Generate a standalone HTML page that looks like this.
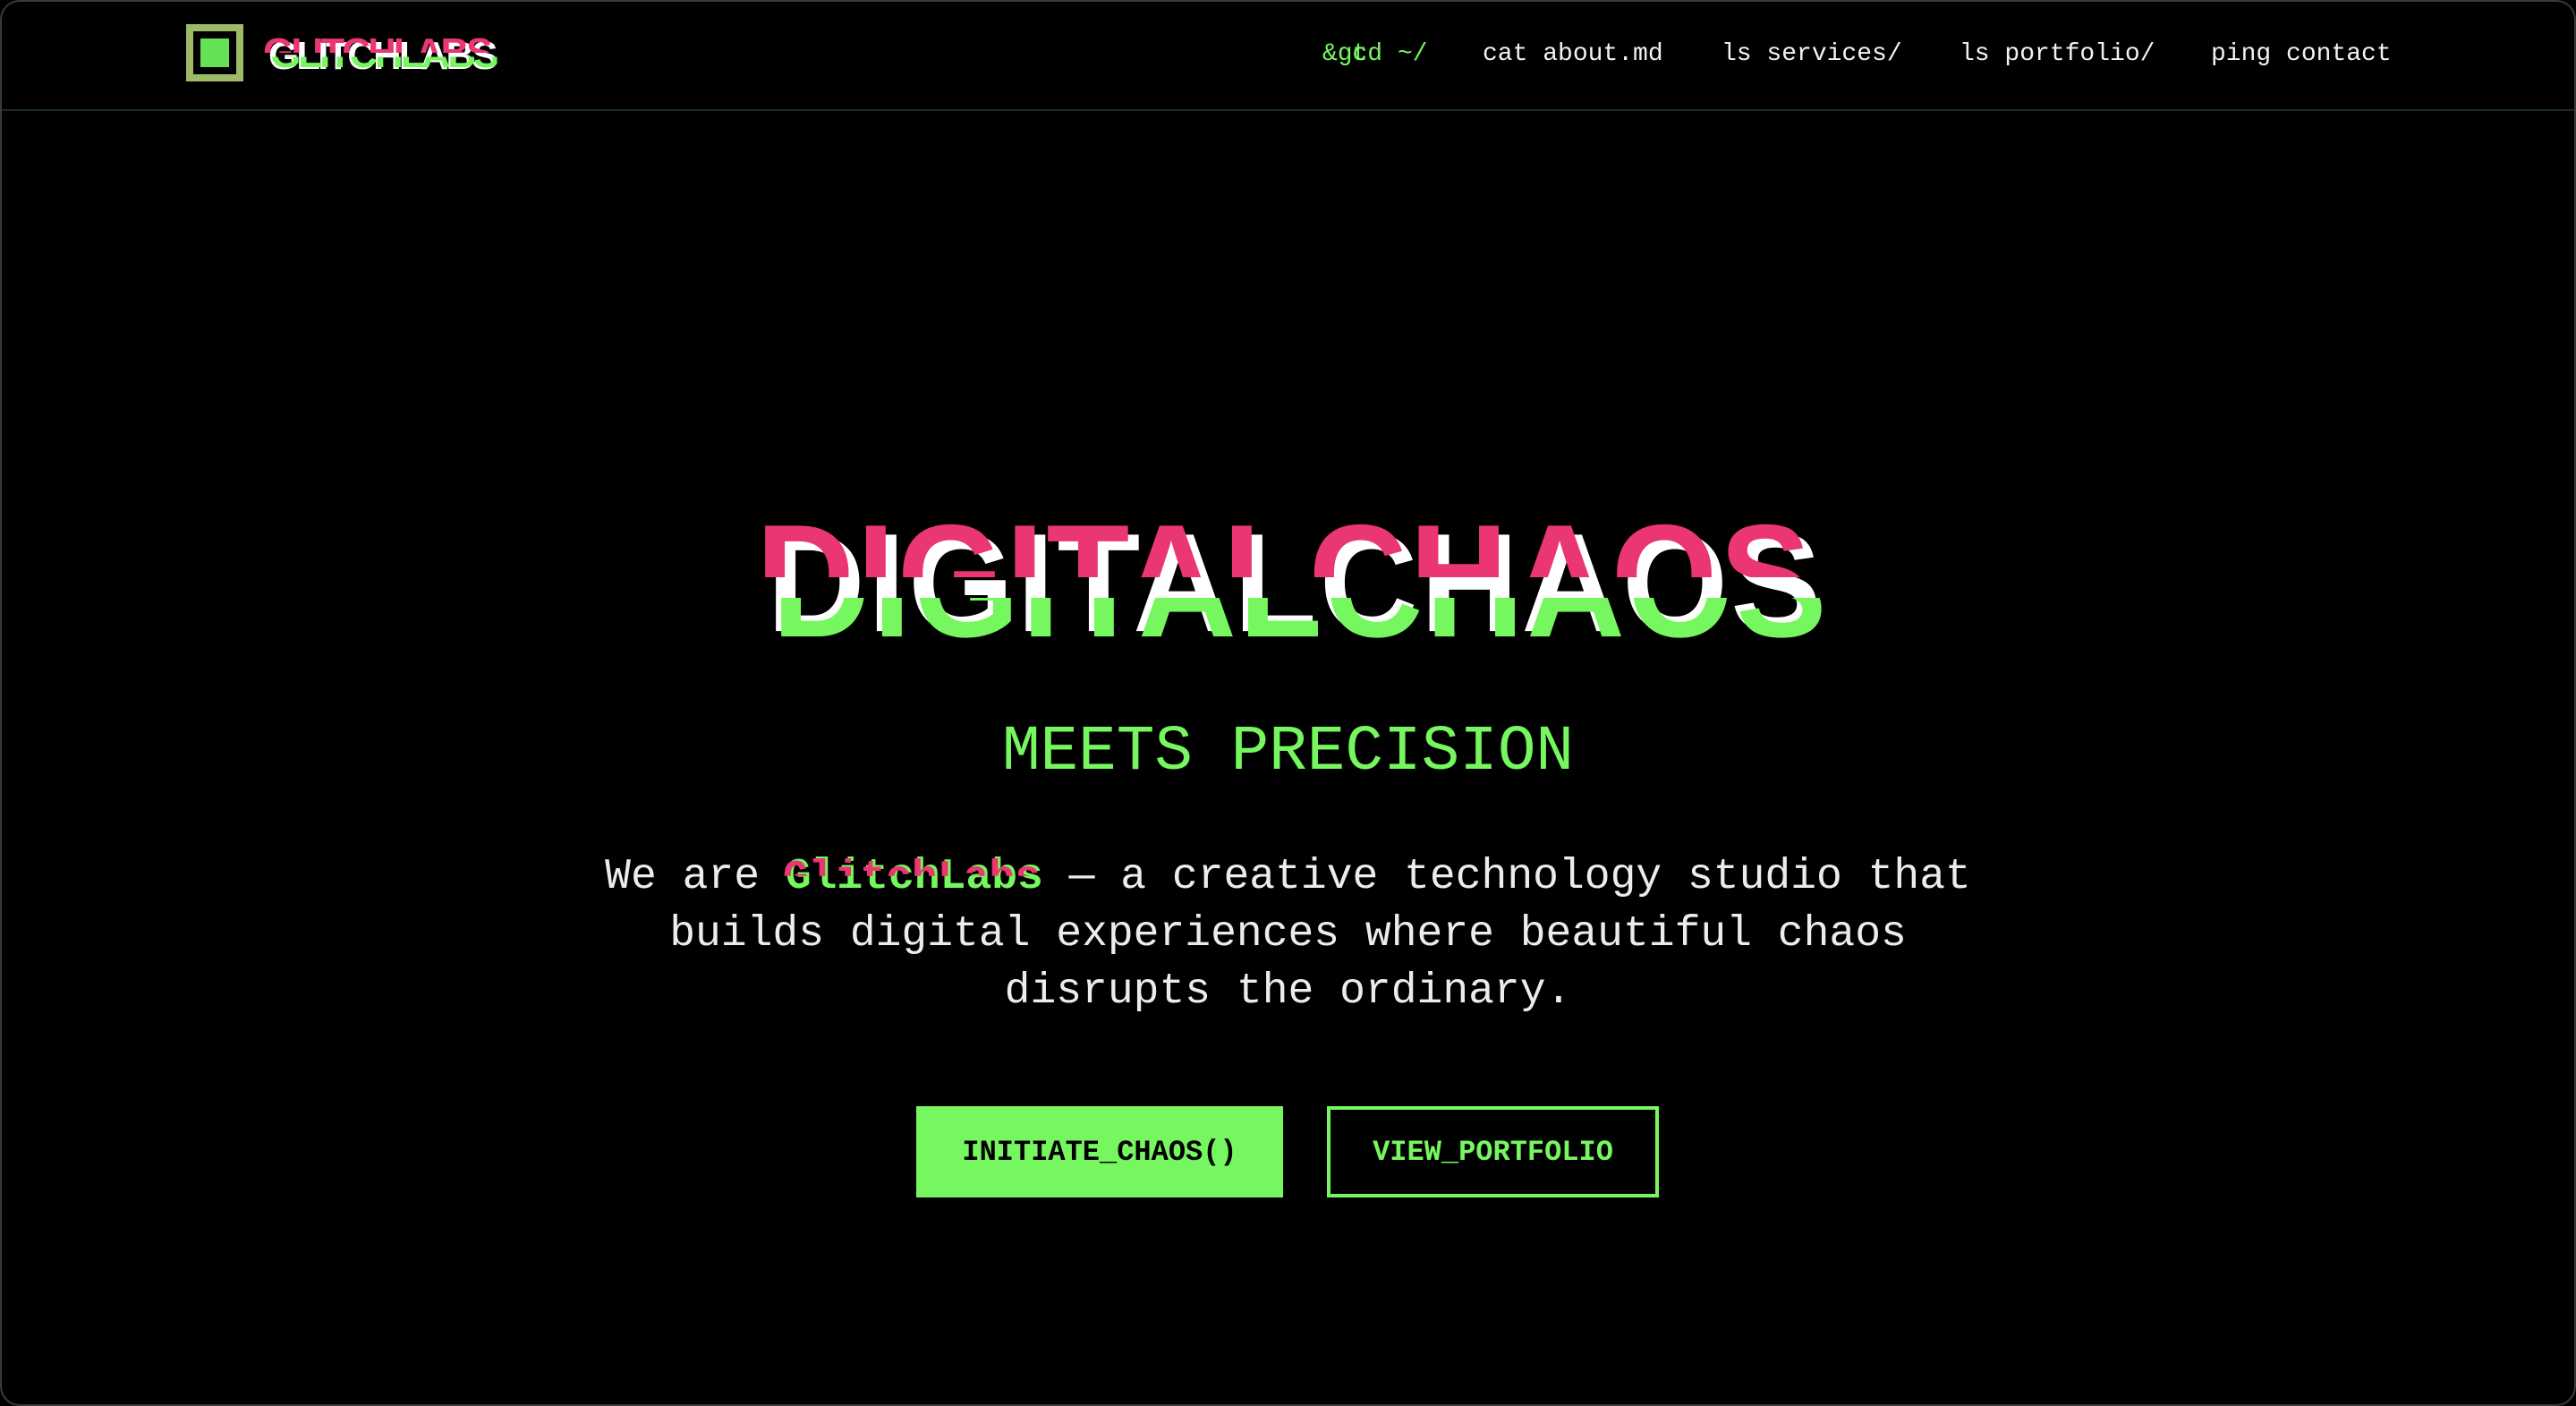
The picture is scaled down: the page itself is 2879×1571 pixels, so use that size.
<!DOCTYPE html>
<html><head><meta charset="utf-8"><style>
*{margin:0;padding:0;box-sizing:border-box}
html,body{width:2879px;height:1571px;background:#000;overflow:hidden}
body{position:relative;font-family:"Liberation Mono",monospace;color:#eee}
.frame{position:absolute;inset:0;border:2px solid #3a3a3a;border-radius:22px;pointer-events:none}
header{position:absolute;left:0;top:0;width:2879px;height:124px;border-bottom:2px solid #1c2e1c}
.logo{position:absolute;left:208px;top:27px;width:64px;height:64px;border:8px solid #9dba67}
.logo i{position:absolute;left:8px;top:8px;width:32px;height:32px;background:#66e055}
.lt{position:absolute;left:296px;top:34px;font:bold 44px "Liberation Sans",sans-serif;letter-spacing:-3px;height:50px}
.lt span{position:absolute;left:0;top:0;white-space:nowrap}
.nav{position:absolute;top:45px;font-size:28px;color:#f2f2f2;white-space:nowrap}
.g{color:#76f75f}
.t{position:absolute;left:845px;top:560px;width:1300px;height:170px}
.t span{position:absolute;left:0;top:0;font:bold 152px "Liberation Sans",sans-serif;letter-spacing:3px;white-space:nowrap;line-height:170px;transform:scaleY(1.03);transform-origin:top left}
.w{color:#fff;left:12px!important;top:4px!important}
.p{color:#ea3671;clip-path:inset(0 0 48% 0);left:0!important;top:-6px!important}
.gr{color:#76f75f;clip-path:inset(56% 0 0 0);left:18px!important;top:10px!important}
.m{position:absolute;left:0;width:2879px;top:800px;text-align:center;font-size:71px;color:#76f75f;line-height:82px}
.para{position:absolute;left:0;width:2879px;top:948px;text-align:center;font-size:48px;line-height:64px;color:#ececec}
.gl{position:relative;color:#76f75f;font-weight:bold}
.gl b{position:absolute;left:-3px;top:-3px;color:#ea3671;clip-path:inset(0 0 55% 0)}
.btn{position:absolute;top:1236px;height:102px;font-weight:bold;font-size:32px;display:flex;align-items:center;justify-content:center}
.b1{left:1024px;width:410px;background:#76f75f;color:#000}
.b2{left:1483px;width:371px;border:4px solid #76f75f;color:#76f75f}
</style></head><body>
<header>
<div class="logo"><i></i></div>
<div class="lt"><span style="color:#fff;left:4px;top:4px">GLITCHLABS</span><span style="color:#ea3671;clip-path:inset(0 0 50% 0);left:-2px;top:0">GLITCHLABS</span><span style="color:#76f75f;clip-path:inset(55% 0 0 0);left:6px;top:2px">GLITCHLABS</span></div>
<div class="nav g" style="left:1478px">&amp;gt<span style="margin-left:-17px">cd</span> ~/</div>
<div class="nav" style="left:1657px">cat about.md</div>
<div class="nav" style="left:1924px">ls services/</div>
<div class="nav" style="left:2190px">ls portfolio/</div>
<div class="nav" style="left:2471px">ping contact</div>
</header>
<div class="t"><span class="w">DIGITALCHAOS</span><span class="p">DIGITALCHAOS</span><span class="gr">DIGITALCHAOS</span></div>
<div class="m">MEETS PRECISION</div>
<div class="para">We are <span class="gl">GlitchLabs<b>GlitchLabs</b></span> — a creative technology studio that<br>builds digital experiences where beautiful chaos<br>disrupts the ordinary.</div>
<div class="btn b1">INITIATE_CHAOS()</div>
<div class="btn b2">VIEW_PORTFOLIO</div>
<div class="frame"></div>
</body></html>
